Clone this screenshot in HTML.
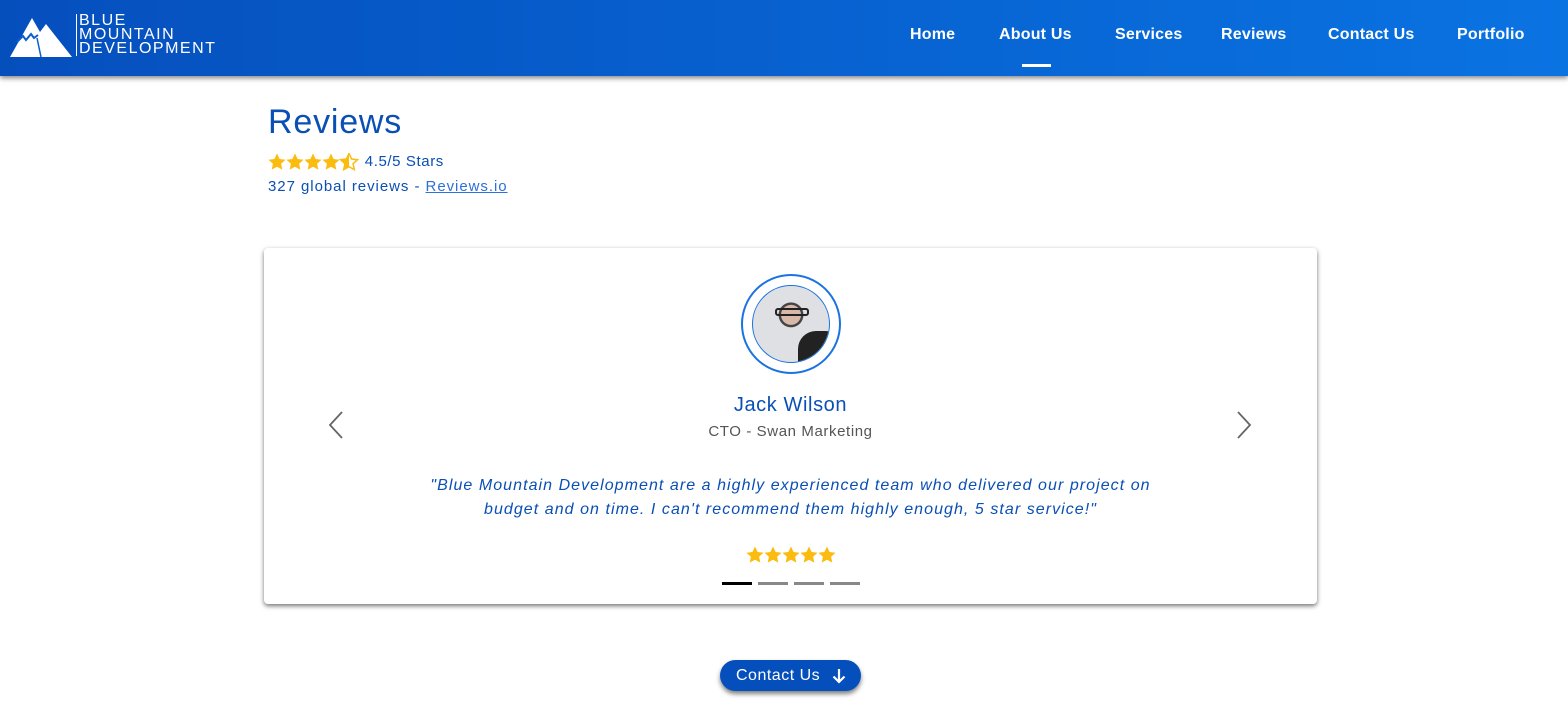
<!DOCTYPE html>
<html><head><style>
*{margin:0;padding:0;box-sizing:border-box}
body{width:1568px;height:714px;background:#fff;font-family:"Liberation Sans",sans-serif;position:relative;overflow:hidden}
.hdr{position:absolute;left:0;top:0;width:1568px;height:76px;background:linear-gradient(90deg,#054fbd,#0a73e2);box-shadow:0 2px 5px rgba(0,0,0,.5)}
.nav a{position:absolute;top:26px;color:#fff;font-size:16px;font-weight:bold;text-decoration:none;letter-spacing:.2px}
.logo{position:absolute;left:76px;top:14px;border-left:1px solid #fff;padding-left:2px;color:#fff;font-size:16px;line-height:14px;letter-spacing:1.5px}
h1{position:absolute;left:268px;top:103px;font-size:34px;font-weight:normal;color:#0a4fb5;letter-spacing:.8px}
.t{position:absolute;left:268px;color:#0a4fb5;font-size:15px;letter-spacing:.6px}
.c{position:absolute;width:100%;text-align:center}
svg.s{display:inline-block;vertical-align:middle}
</style></head><body>
<svg width="0" height="0" style="position:absolute"><defs><path id="st" d="M9 0.5 L11.6 6 L17.5 6.7 L13.1 10.7 L14.3 16.6 L9 13.7 L3.7 16.6 L4.9 10.7 L0.5 6.7 L6.4 6Z"/><clipPath id="h"><rect x="0" y="0" width="9" height="18"/></clipPath></defs></svg>
<div class="hdr">
<svg style="position:absolute;left:10px;top:14px" width="64" height="44" viewBox="0 0 64 44"><path d="M0 43 L22 4 L30 18 L36 10 L62 43Z" fill="#fff"/><path d="M7 28 L13 22 L16 26 L21 20 L24 24 L28 21" stroke="#0a5fcc" stroke-width="2" fill="none"/><path d="M31 43 L27 24" stroke="#0a5fcc" stroke-width="1.5"/></svg>
<div class="logo">BLUE<br>MOUNTAIN<br>DEVELOPMENT</div>
<div class="nav"><a style="left:910px">Home</a><a style="left:999px">About Us</a><a style="left:1115px">Services</a><a style="left:1221px">Reviews</a><a style="left:1328px">Contact Us</a><a style="left:1457px">Portfolio</a></div>
<div style="position:absolute;left:1022px;top:64px;width:29px;height:3px;background:#fff"></div>
</div>
<h1>Reviews</h1>
<div class="t" style="top:153px"><svg class="s" width="92" height="18" viewBox="0 0 92 18" fill="#fbbb0f"><use href="#st"/><use href="#st" x="18"/><use href="#st" x="36"/><use href="#st" x="54"/><g transform="translate(72 0)"><use href="#st" clip-path="url(#h)"/><use href="#st" fill="none" stroke="#fbbb0f" stroke-width="1.5"/></g></svg> 4.5/5 Stars</div>
<div class="t" style="top:178px;letter-spacing:.95px">327 global reviews - <u style="color:#2f6fd8">Reviews.io</u></div>
<div style="position:absolute;left:264px;top:248px;width:1053px;height:356px;background:#fff;border-radius:4px;box-shadow:0 2px 5px rgba(0,0,0,.55)">
<div style="position:absolute;left:477px;top:26px;width:100px;height:100px;border:2px solid #1a73e0;border-radius:50%"></div>
<div style="position:absolute;left:488px;top:37px;width:78px;height:78px;border:1px solid #1a73e0;border-radius:50%;background:radial-gradient(circle at 50% 38%,#d8b8a8 0 16%,#444 17% 20%,#dfe0e4 21%);overflow:hidden"><div style="position:absolute;left:45px;top:45px;width:45px;height:45px;background:#222;border-radius:40% 40% 0 0"></div><div style="position:absolute;left:22px;top:22px;width:34px;height:8px;border:2px solid #222;border-radius:3px"></div></div>
<div class="c" style="top:146px;font-size:20px;color:#0a4fb5;letter-spacing:.6px">Jack Wilson</div>
<div class="c" style="top:175px;font-size:15px;color:#555;letter-spacing:.6px">CTO - Swan Marketing</div>
<div class="c" style="top:226px;font-size:16px;line-height:24px;color:#0a4fb5;font-style:italic;letter-spacing:1.05px">"Blue Mountain Development are a highly experienced team who delivered our project on<br>budget and on time. I can't recommend them highly enough, 5 star service!"</div>
<div class="c" style="top:298px"><svg class="s" width="90" height="18" viewBox="0 0 90 18" fill="#fbbb0f"><use href="#st"/><use href="#st" x="18"/><use href="#st" x="36"/><use href="#st" x="54"/><use href="#st" x="72"/></svg></div>
<div style="position:absolute;left:458px;top:334px;width:30px;height:3px;background:#000"></div>
<div style="position:absolute;left:494px;top:334px;width:30px;height:3px;background:#888"></div>
<div style="position:absolute;left:530px;top:334px;width:30px;height:3px;background:#888"></div>
<div style="position:absolute;left:566px;top:334px;width:30px;height:3px;background:#888"></div>
<svg style="position:absolute;left:64px;top:163px" width="16" height="28"><path d="M14 1 L2 14 L14 27" stroke="#666" stroke-width="1.8" fill="none"/></svg>
<svg style="position:absolute;left:972px;top:163px" width="16" height="28"><path d="M2 1 L14 14 L2 27" stroke="#666" stroke-width="1.8" fill="none"/></svg>
</div>
<div style="position:absolute;left:720px;top:660px;width:141px;height:31px;background:#054fbd;border-radius:16px;box-shadow:0 3px 5px rgba(0,0,0,.5);color:#fff;font-size:16px;line-height:31px;padding-left:16px;letter-spacing:.5px">Contact Us
<svg style="position:absolute;left:112px;top:8px" width="14" height="16"><path d="M7 1 V14 M1.5 8.5 L7 14 L12.5 8.5" stroke="#fff" stroke-width="2.2" fill="none"/></svg></div>
</body></html>
